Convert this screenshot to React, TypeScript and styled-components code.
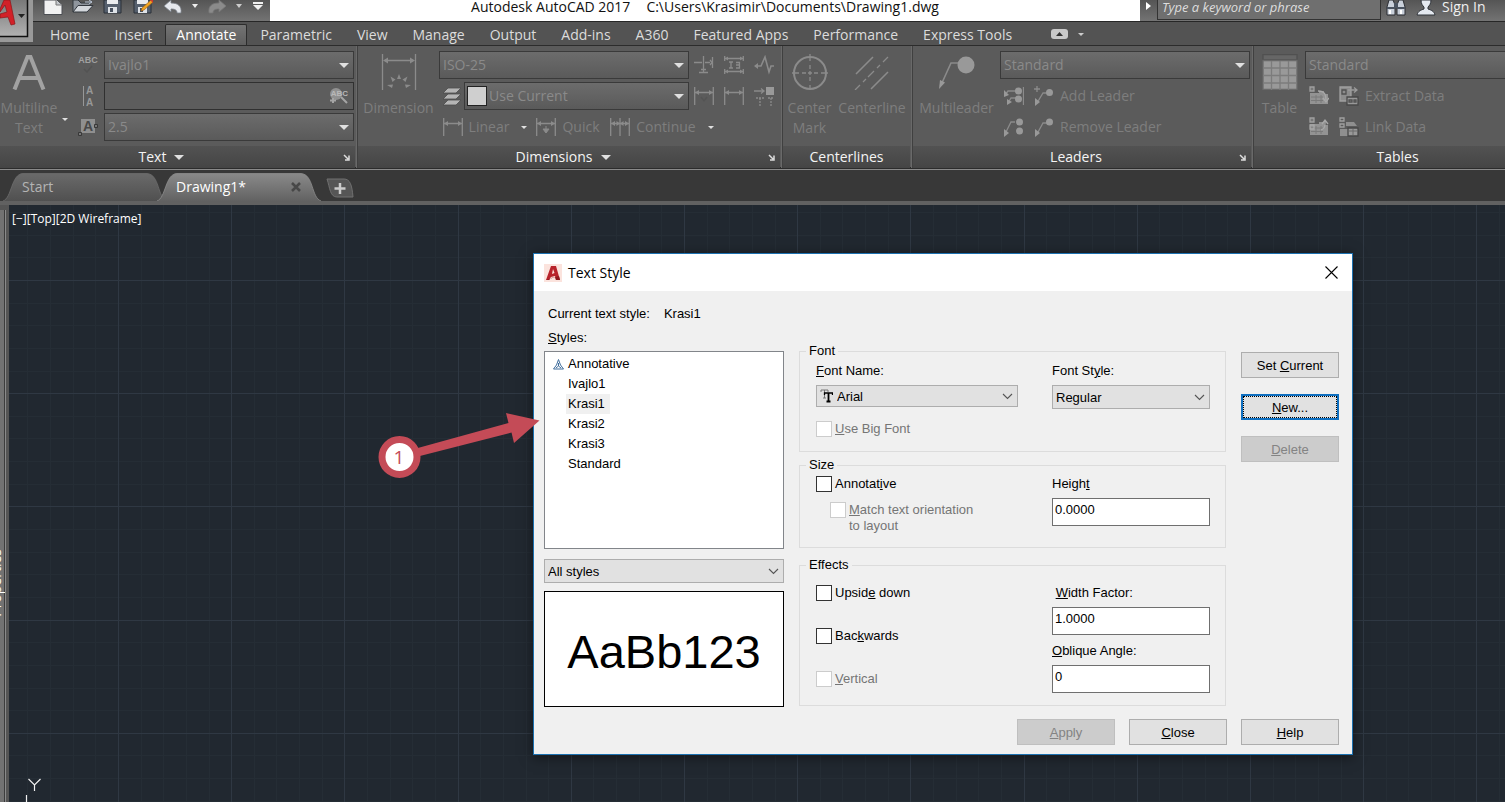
import React, { useState } from 'react';
import styled, { createGlobalStyle, css } from 'styled-components';

const UI_FONT = '"Open Sans", "Noto Sans", sans-serif';
const DIALOG_FONT = '"Liberation Sans", Arial, sans-serif';

const GlobalStyle = createGlobalStyle`
  * { box-sizing: border-box; }
  html, body { margin: 0; padding: 0; }
  body { background: #212830; overflow: hidden; font: 14px/20px ${UI_FONT}; }
  button, input, select { font: inherit; margin: 0; }
  button { border: 0; padding: 0; background: none; color: inherit; cursor: default; }
`;

/* ---------- window frame ---------- */

const Page = styled.div`
  position: relative;
  display: flex;
  flex-direction: column;
  min-height: 100vh;
`;

const TitleBar = styled.header`
  display: flex;
  align-items: flex-start;
  height: 22px;
  overflow: hidden;
  padding-left: 33px;
  border-bottom: 1px solid #262626;
  background: linear-gradient(#555, #737373);
`;

const AppButton = styled.button`
  position: absolute;
  top: 0;
  left: 0;
  width: 34px;
  height: 42px;
  z-index: 1;
  svg { display: block; }
`;

const QuickAccess = styled.div`
  display: flex;
  flex: none;
  width: 237px;
  padding-left: 5px;
`;

const QuickButton = styled.button<{ $width: number }>`
  display: flex;
  justify-content: center;
  flex: none;
  width: ${p => p.$width}px;
  height: 21px;
`;

const WindowTitle = styled.div`
  flex: 1;
  display: flex;
  justify-content: center;
  gap: 16px;
  height: 21px;
  line-height: 14px;
  background: #fff;
  color: #111;
  white-space: nowrap;
`;

const InfoCenter = styled.div`
  display: flex;
  align-items: flex-start;
  flex: none;
  width: 365px;
  height: 21px;
`;

const SearchInput = styled.input`
  width: 224px;
  height: 20px;
  padding: 0 4px 6px;
  border: 1px solid #333;
  border-top: 0;
  border-radius: 0;
  background: #6f6f6f;
  color: #ddd;
  font-style: italic;
  font-size: 13px;
  line-height: 13px;
  &::placeholder { color: #ddd; opacity: 1; }
`;

const SignIn = styled.button`
  display: flex;
  align-items: flex-start;
  gap: 6px;
  margin-left: 5px;
  color: #f0f0f0;
  line-height: 14px;
`;

/* ---------- ribbon ---------- */

const RibbonTabs = styled.nav`
  display: flex;
  align-items: flex-end;
  gap: 1px;
  height: 24px;
  padding-left: 38px;
  border-bottom: 1px solid #2c2c2c;
  background: #535353;
`;

const RibbonTab = styled.button<{ $active?: boolean }>`
  flex: none;
  height: 21px;
  padding: 0 11px;
  border: 1px solid transparent;
  border-bottom: 0;
  border-radius: 2px 2px 0 0;
  color: #dcdcdc;
  line-height: 20px;
  white-space: nowrap;
  ${p =>
    p.$active &&
    css`
      padding: 0 10px;
      border-color: #2c2c2c;
      background: linear-gradient(#747474, #5e5e5e);
      color: #fff;
    `}
`;

const RibbonToggle = styled.button`
  display: flex;
  align-items: center;
  gap: 10px;
  height: 22px;
  margin-left: 26px;
`;

const Ribbon = styled.section`
  display: flex;
  overflow: hidden;
  height: 124px;
  border-bottom: 1px solid #8a8a8a;
  background: #5b5b5b;
  box-shadow: inset 0 -2px #2c2c2c;
`;

const Panel = styled.section<{ $width: number }>`
  display: flex;
  flex-direction: column;
  flex: none;
  width: ${p => p.$width}px;
  height: 122px;
  border-right: 1px solid #404040;
  box-shadow: inset -1px 0 #696969;
`;

const PanelBody = styled.div`
  display: flex;
  height: 100px;
  padding-top: 5px;
`;

const PanelTitle = styled.div<{ $trail?: number }>`
  position: relative;
  display: flex;
  align-items: center;
  justify-content: center;
  gap: 8px;
  height: 22px;
  margin-right: 2px;
  padding-right: ${p => p.$trail ?? 0}px;
  background: linear-gradient(#525252, #454545);
  color: #f4f4f4;
`;

const Launcher = styled.button`
  position: absolute;
  right: 4px;
  bottom: 6px;
  display: flex;
`;

const BigButton = styled.button<{ $width: number }>`
  display: flex;
  flex: none;
  flex-direction: column;
  align-items: center;
  gap: 8px;
  width: ${p => p.$width}px;
  height: 95px;
  padding-top: 3px;
  color: #7e7e7e;
  line-height: 20px;
`;

const BigButtonMenu = styled.button`
  display: flex;
  justify-content: center;
  flex: none;
  width: 14px;
  height: 95px;
  padding-top: 67px;
`;

const Rows = styled.div`
  display: flex;
  flex-direction: column;
  gap: 3px;
`;

const Row = styled.div`
  display: flex;
  align-items: center;
  height: 28px;
`;

const PairRow = styled(Row)`
  gap: 6px;
`;

const ToolButton = styled.button<{ $width?: number }>`
  display: flex;
  align-items: center;
  justify-content: center;
  flex: none;
  gap: 6px;
  height: 28px;
  width: ${p => (p.$width ? `${p.$width}px` : 'auto')};
  color: #7e7e7e;
  white-space: nowrap;
`;

const ComboFrame = styled.span<{ $width: number }>`
  display: grid;
  flex: none;
  width: ${p => p.$width}px;
  height: 28px;
  > * { grid-area: 1 / 1; }
  > svg { align-self: center; justify-self: end; margin-right: 5px; pointer-events: none; }
`;

const ComboSelect = styled.select<{ $swatch?: boolean }>`
  appearance: none;
  width: 100%;
  padding: 0 24px 0 ${p => (p.$swatch ? 24 : 3)}px;
  border: 1px solid #3a3a3a;
  border-radius: 0;
  background: linear-gradient(#6c6c6c, #5a5a5a);
  color: #8a8a8a;
  &:disabled { opacity: 1; color: #8a8a8a; }
`;

const Swatch = styled.span`
  align-self: center;
  width: 20px;
  height: 20px;
  margin-left: 3px;
  border: 1px solid #222;
  background: #cfcfcf;
`;

const FindInput = styled.input`
  width: 100%;
  padding: 0 28px 0 4px;
  border: 1px solid #303030;
  border-radius: 0;
  background: #5d5d5d;
  color: #ccc;
`;

/* ---------- file tabs ---------- */

const FileTabs = styled.nav`
  display: flex;
  align-items: flex-end;
  height: 35px;
  padding-left: 3px;
  border-bottom: 4px solid #616161;
  background: #383838;
`;

const FileTab = styled.div<{ $active?: boolean }>`
  position: relative;
  flex: none;
  display: flex;
  align-items: center;
  justify-content: space-between;
  width: 164px;
  height: 28px;
  padding: 0 20px 0 19px;
  color: ${p => (p.$active ? '#fff' : '#b4b4b4')};
  > svg { position: absolute; top: 0; left: 0; }
  > button { position: relative; line-height: 30px; }
  & + & { margin-left: -10px; }
`;

const NewTab = styled.button`
  display: flex;
  margin: 0 0 3px 5px;
`;

/* ---------- drawing area ---------- */

const Workspace = styled.main`
  display: flex;
  flex: 1;
`;

const Palette = styled.aside`
  position: relative;
  flex: none;
  width: 9px;
  overflow: hidden;
  border-top: 5px solid #555;
  border-right: 2px solid #555;
  background: linear-gradient(90deg, #727272 0 4px, #3c3c3c 4px 5px, #8a8a8a 5px 6px, #555 6px);
`;

const PaletteTitle = styled.span`
  position: absolute;
  right: 1px;
  top: 339px;
  writing-mode: vertical-rl;
  transform: rotate(180deg);
  color: #fff;
  line-height: 20px;
`;

const Canvas = styled.div`
  position: relative;
  flex: 1;
  min-height: 597px;
  overflow: hidden;
  background: #212830;
`;

const GridDrawing = styled.svg`
  position: absolute;
  inset: 0;
  width: 100%;
  height: 100%;
`;

const ViewControls = styled.div`
  position: absolute;
  top: 4px;
  left: 3px;
  display: flex;
  color: #fff;
  font-size: 12px;
`;

const UcsIcon = styled.svg`
  position: absolute;
  left: 14px;
  bottom: 0;
`;

const Callout = styled.svg`
  position: absolute;
  left: 368px;
  top: 200px;
`;

/* ---------- dialog ---------- */

const Dialog = styled.section`
  position: absolute;
  left: 524px;
  top: 48px;
  border: 1px solid #1c71b0;
  background: #f0f0f0;
  color: #000;
  font: 13px/16px ${DIALOG_FONT};
  box-shadow: 0 2px 12px rgba(0, 0, 0, 0.5);
`;

const DialogHeader = styled.header`
  display: flex;
  align-items: center;
  gap: 6px;
  height: 37px;
  padding: 0 14px 0 10px;
  background: #fff;
  font: 14px/20px ${UI_FONT};
`;

const DialogTitle = styled.h1`
  flex: 1;
  margin: 0;
  font: inherit;
`;

const CloseButton = styled.button`
  display: flex;
`;

const DialogBody = styled.div`
  display: grid;
  grid-template-columns: 240px 427px 98px;
  column-gap: 15px;
  padding: 0 13px 9px 10px;
`;

const StylesColumn = styled.div`
  display: flex;
  flex-direction: column;
  padding-top: 15px;
`;

const CurrentStyle = styled.div`
  display: flex;
  gap: 14px;
  padding-left: 4px;
`;

const ListLabel = styled.span`
  margin: 8px 0 5px;
  padding-left: 4px;
`;

const StyleList = styled.ul`
  height: 198px;
  margin: 0 0 10px;
  padding: 2px 0;
  border: 1px solid #82858a;
  background: #fff;
  list-style: none;
  line-height: 20px;
`;

const StyleItem = styled.li`
  display: flex;
  align-items: center;
  padding-left: 6px;
`;

const StyleMark = styled.span`
  display: flex;
  justify-content: center;
  width: 15px;
`;

const StyleName = styled.span<{ $selected: boolean }>`
  padding: 0 5px 0 2px;
  background: ${p => (p.$selected ? '#f0f0f0' : 'transparent')};
`;

const Preview = styled.div`
  display: flex;
  align-items: center;
  justify-content: center;
  height: 116px;
  margin-top: 8px;
  padding-top: 6px;
  border: 1px solid #000;
  background: #fff;
  font-size: 47px;
  line-height: 56px;
`;

const GroupColumn = styled.div`
  display: flex;
  flex-direction: column;
  padding-top: 52px;
`;

const Group = styled.fieldset<{ $top: number; $bottom: number; $before?: number }>`
  display: grid;
  grid-template-columns: 236px 158px;
  min-width: 0;
  margin: ${p => p.$before ?? 0}px 0 0;
  padding: ${p => p.$top}px 15px ${p => p.$bottom}px 16px;
  border: 1px solid #dcdcdc;
`;

const Legend = styled.legend`
  margin-left: -10px;
  padding: 0 3px;
`;

const Stack = styled.div<{ $gap: number }>`
  display: flex;
  flex-direction: column;
  align-items: flex-start;
  gap: ${p => p.$gap}px;
`;

const Field = styled.label`
  display: flex;
  flex-direction: column;
  gap: 6px;
`;

const DropFrame = styled.span<{ $width: number; $height: number }>`
  display: grid;
  width: ${p => p.$width}px;
  height: ${p => p.$height}px;
  > * { grid-area: 1 / 1; }
  > svg { align-self: center; pointer-events: none; }
  > svg:last-child { justify-self: end; margin-right: 5px; }
`;

const DropSelect = styled.select<{ $icon?: boolean }>`
  appearance: none;
  width: 100%;
  padding: 1px 20px 0 ${p => (p.$icon ? 20 : 3)}px;
  border: 1px solid #adadad;
  border-radius: 0;
  background: #e1e1e1;
  color: #000;
`;

const TypefaceIcon = styled.svg`
  margin-left: 4px;
`;

const ValueInput = styled.input`
  width: 158px;
  height: 28px;
  padding: 0 2px 5px;
  border: 1px solid #6f6f6f;
  border-radius: 0;
  background: #fff;
  color: #000;
`;

const CheckLabel = styled.label<{ $disabled?: boolean; $nested?: boolean }>`
  display: flex;
  align-items: flex-start;
  gap: 3px;
  margin-left: ${p => (p.$nested ? 14 : 0)}px;
  color: ${p => (p.$disabled ? '#757575' : '#000')};
`;

const CheckBox = styled.input`
  appearance: none;
  flex: none;
  width: 16px;
  height: 16px;
  border: 1px solid #333;
  background: #fff;
  &:checked { box-shadow: inset 0 0 0 3px #fff; background: #333; }
  &:disabled { border-color: #ccc; }
`;

const ActionColumn = styled.div`
  display: flex;
  flex-direction: column;
  gap: 16px;
  padding-top: 61px;
`;

const DialogFooter = styled.footer`
  grid-column: 1 / -1;
  display: flex;
  justify-content: flex-end;
  gap: 14px;
  margin-top: 12px;
`;

const PushButton = styled.button<{ $focused?: boolean }>`
  width: 98px;
  height: 26px;
  padding-top: 1px;
  border: 1px solid #adadad;
  background: #e1e1e1;
  color: #000;
  &:disabled { border-color: #bfbfbf; background: #ccc; color: #838383; }
  ${p =>
    p.$focused &&
    css`
      border: 2px solid #0f6fc0;
      outline: 1px dotted #000;
      outline-offset: -3px;
    `}
`;

/* ---------- icons ---------- */

const Arrow = ({ w = 10, fill = '#e0e0e0' }: { w?: number; fill?: string }) => (
  <svg width={w} height={w / 2} viewBox="0 0 10 5" aria-hidden>
    <path d="M0 0h10L5 5z" fill={fill} />
  </svg>
);

const Chevron = () => (
  <svg width="11" height="7" viewBox="0 0 11 7" aria-hidden>
    <path d="M1 1l4.500 4.500L10 1" fill="none" stroke="#555" strokeWidth="1.1" />
  </svg>
);

const LaunchIcon = () => (
  <svg width="8" height="8" viewBox="0 0 8 8" fill="none" stroke="#ddd" aria-hidden>
    <path d="M1 1l4 4M6 1.5V6H2" strokeWidth="1.5" />
  </svg>
);

const Ico = ({ size = 20, children }: { size?: number; children: React.ReactNode }) => (
  <svg width={size} height={size} viewBox={`0 0 ${size} ${size}`} fill="none" stroke="#8b8b8b" strokeWidth="1.3" aria-hidden>
    {children}
  </svg>
);

const DimensionBig = () => (
  <Ico size={36}>
    <path d="M1.500 0v36M34.500 0v36M4 6.500h28" />
    <path d="M2 6.500l5-3v6zM34 6.500l-5-3v6z" fill="#8b8b8b" stroke="none" />
    <path d="M18 20l2 5h-4zM9.500 22.500l5 3-3 2.500zM26.500 22.500l-5 3 3 2.500zM6 31l6-.5-1 3.500zM30 31l-6-.5 1 3.500z" fill="#8b8b8b" stroke="none" />
  </Ico>
);

const CenterMarkBig = () => (
  <Ico size={36}>
    <circle cx="18" cy="19" r="16" strokeWidth="2" />
    <path d="M18 0v7M18 11v4M18 17v4M16 19h4M18 23v4M18 31v5M0 19h7M10 19h4M22 19h4M29 19h7" />
  </Ico>
);

const CenterlineBig = () => (
  <Ico size={36}>
    <path d="M2 20L19 3M17 35l17-17" strokeWidth="1.600" />
    <path d="M1 36l5-5M9 28l3-3M14 23l6-6M23 14l3-3M29 8l5-5" />
  </Ico>
);

const MultileaderBig = () => (
  <Ico size={36}>
    <path d="M2 31L12 9h9" strokeWidth="1.600" />
    <path d="M0 35l1-9 5 2.500z" fill="#999" stroke="none" />
    <circle cx="27" cy="11" r="8.500" fill="#999" stroke="none" />
  </Ico>
);

const TableBig = () => (
  <Ico size={36}>
    <path d="M1 .5h34V6H1z" fill="#666" stroke="#505050" />
    <path d="M1 6.500h34v29H1z" fill="#999" stroke="#6a6a6a" />
    <path d="M9.500 7v29M18 7v29M26.500 7v29M1 14h34M1 21.500h34M1 29h34" stroke="#7c7c7c" />
  </Ico>
);

const LetterA = () => (
  <svg width="34" height="36" viewBox="0 0 34 36" aria-hidden>
    <path d="M2.500 35.500L15.500 3h3l13 32.500M8 24h18" fill="none" stroke="#a2a2a2" strokeWidth="4" />
  </svg>
);

const SpellIcon = () => (
  <svg width="22" height="24" viewBox="0 0 22 24" aria-hidden>
    <text x="11" y="10" fontSize="9" fontWeight="700" textAnchor="middle" fill="#a0a0a0" fontFamily="Liberation Sans">
      ABC
    </text>
    <path d="M7 16l3 3 5-6" fill="none" stroke="#535353" strokeWidth="1.500" />
  </svg>
);

const AlignIcon = () => (
  <svg width="20" height="24" viewBox="0 0 20 24" fontFamily="Liberation Sans" fontSize="10" fontWeight="700" fill="#989898" aria-hidden>
    <path d="M5.500 2v20" stroke="#989898" />
    <text x="8" y="10">A</text>
    <text x="8" y="22">A</text>
  </svg>
);

const TextHeightIcon = () => (
  <svg width="20" height="20" viewBox="0 0 20 20" aria-hidden>
    <path d="M3 2h14v14H3z" fill="#8f8f8f" />
    <text x="10" y="14" fontSize="14" fontWeight="700" textAnchor="middle" fill="#484848" fontFamily="Liberation Sans">
      A
    </text>
    <path d="M.5 15.500h3v3h-3zM16.500 7.500h3v3h-3z" fill="#777" stroke="#383838" />
  </svg>
);

const FindTextIcon = () => (
  <svg width="20" height="20" viewBox="0 0 20 20" aria-hidden>
    <circle cx="7" cy="8" r="6" fill="#919191" />
    <text x="19" y="10" textAnchor="end" fontSize="8" fontWeight="700" fill="#b8b8b8" fontFamily="Liberation Sans">
      ABC
    </text>
    <path d="M12 11l6 6M4 12v5M1 14.500h6" stroke="#a5a5a5" strokeWidth="2" />
  </svg>
);

const BreakIcon = () => (
  <Ico>
    <path d="M0 7.500h8M11 7.500h5M9.500 1v16M18.500 2v11M5 17.500h9M7 14.500h5M16 5l2 2.500-2 2.500" />
  </Ico>
);
const AdjustIcon = () => (
  <Ico>
    <path d="M.7 1v5M19.300 1v5M1 3.500h18M.7 14v5M19.300 14v5M1 16.500h18M5 7h4M7 7v6M5 13h4M12 7.500h3.500v5.500H12M12 10h3" />
    <path d="M1 3.500l3-2v4zM19 3.500l-3-2v4zM1 16.500l3-2v4zM19 16.500l-3-2v4z" fill="#8b8b8b" stroke="none" />
  </Ico>
);
const JogIcon = () => (
  <Ico>
    <path d="M1 11h6l4-9 4 15 2-6h3" strokeWidth="1.600" />
    <path d="M0 11l4-3v6z" fill="#8b8b8b" stroke="none" />
  </Ico>
);
const DimIcon = ({ variant }: { variant?: 'quick' | 'continue' | 'check' }) => (
  <Ico>
    <path d="M.7 1v18M19.300 1v18M1 6.500h18" />
    <path d="M1 6.500l4-2.500v5zM19 6.500l-4-2.500v5z" fill="#8b8b8b" stroke="none" />
    {variant === 'quick' && <path d="M10 9v4M7 12h6l-3 4z" fill="#8b8b8b" strokeWidth="1" />}
    {variant === 'continue' && (
      <>
        <path d="M10 1v18" />
        <path d="M10 6.500L6.500 4v5zM10 6.500L13.500 4v5z" fill="#8b8b8b" stroke="none" />
      </>
    )}
    {variant === 'check' && <path d="M7 11l3 4 3-4" stroke="#545454" />}
  </Ico>
);
const UpdateIcon = () => (
  <Ico>
    <path d="M0 5h9M7 2.500L10 5 7 7.500" />
    <path d="M12 1h8v8h-8z" fill="#999" stroke="none" />
    <path d="M2 12h9M6 12v8M14 12h5M17 12v8" strokeDasharray="2 1" />
  </Ico>
);
const LayersIcon = () => (
  <svg width="20" height="20" viewBox="0 0 20 20" fill="#b5b5b5" stroke="#4c4c4c" strokeWidth=".8" aria-hidden>
    <path d="M1 19l5-5h13l-5 5zM1 13l5-5h13l-5 5zM1 7l5-5h13l-5 5z" />
  </svg>
);
const LeaderIcon = ({ kind }: { kind: 'align' | 'collect' | 'add' | 'remove' }) => (
  <Ico>
    {kind === 'align' && (
      <>
        <path d="M1 9l3-4h8M4 17l3-5h5M19.500 1v18" />
        <path d="M0 4v7l5-2zM3 13v6l5-3zM11 5a3.500 3.500 0 107 0 3.500 3.500 0 10-7 0M11 13a3.500 3.500 0 107 0 3.500 3.500 0 10-7 0" fill="#999" stroke="none" />
      </>
    )}
    {kind === 'collect' && (
      <>
        <path d="M1 17L7 5h4" />
        <path d="M0 12v8l5-4zM12 5a3.500 3.500 0 107 0 3.500 3.500 0 10-7 0M12 14a3.500 3.500 0 107 0 3.500 3.500 0 10-7 0" fill="#999" stroke="none" />
      </>
    )}
    {kind === 'add' && (
      <>
        <path d="M3 17L9 7h4M0 3h6M3 0v6" />
        <path d="M1 12v8l5-4zM12 6.500a3.500 3.500 0 107 0 3.500 3.500 0 10-7 0" fill="#999" stroke="none" />
      </>
    )}
    {kind === 'remove' && (
      <>
        <path d="M3 17L9 6h5" />
        <path d="M1 12v8l5-4zM12 5a3.500 3.500 0 107 0 3.500 3.500 0 10-7 0" fill="#999" stroke="none" />
      </>
    )}
  </Ico>
);
const DataIcon = ({ kind }: { kind: 'update' | 'extract' | 'upload' | 'link' }) => (
  <Ico>
    {(kind === 'update' || kind === 'upload') && (
      <>
        <path d="M1 7h9V5h5v3h4v10H1z" fill="#939393" stroke="none" />
        <path d="M2 11h12M2 14.500h12M7 9v8M12 9v8" stroke="#7a7a7a" strokeWidth="1" />
        <path d="M1 1h4v4H1z" fill="#777" stroke="#a0a0a0" />
        {kind === 'update' ? (
          <path d="M9 5c7 0 8 4 8 9M14 12l3 4 3-4" stroke="#a8a8a8" />
        ) : (
          <path d="M1 8h4v4H1zM12 13c4-1 4-4 4-8M13 7l3-4 3 4" stroke="#a8a8a8" />
        )}
      </>
    )}
    {kind === 'extract' && (
      <>
        <path d="M1 1h11v14H1z" fill="#8c8c8c" stroke="#a0a0a0" />
        <path d="M3 4h4v4H3z" stroke="#505050" />
        <path d="M9 4h9M15 1.500L18 4l-3 2.500" stroke="#9a9a9a" />
        <path d="M8 11h11v8H8z" fill="#989898" stroke="#484848" />
        <path d="M10 14h3v2h-3zM15 14h2v2h-2z" stroke="#505050" />
      </>
    )}
    {kind === 'link' && (
      <>
        <path d="M1 1h4v3H1zM1 7h4v3H1z" stroke="#a0a0a0" />
        <path d="M1 12h8v7H1zM7 5h8l3 4H7z" fill="#8f8f8f" stroke="none" />
        <path d="M9 11h10v8H9z" fill="#999" stroke="#484848" />
        <path d="M10 14h8M14 12v6" stroke="#6a6a6a" strokeWidth="1" />
      </>
    )}
  </Ico>
);

const NewIcon = () => (
  <svg width="20" height="15" viewBox="0 0 20 15" aria-hidden>
    <path d="M1 0h13l5 5v9.500H1z" fill="#f1f1f1" stroke="#4a4d52" />
    <path d="M13 0v5h6" fill="#c3c6cb" stroke="#777" />
  </svg>
);
const OpenIcon = () => (
  <svg width="22" height="13" viewBox="0 0 22 13" aria-hidden>
    <path d="M1 12V0h5l3 3h9v3" fill="#8f959d" stroke="#33383f" />
    <path d="M1 12L6 5.500h15L15 12z" fill="#d3d7dc" stroke="#33383f" />
    <path d="M13 2h7M17 0l3 2-3 2" stroke="#b8c4d4" fill="none" />
  </svg>
);
const SaveIcon = ({ pencil }: { pencil?: boolean }) => (
  <svg width="20" height="14" viewBox="0 0 20 14" aria-hidden>
    <path d="M1 0h17v13H1z" fill="#56606e" stroke="#2b3038" />
    <path d="M4 0h11v4H4z" fill="#e9ebee" />
    <path d="M5 7h9v6H5z" fill="#dfe3e8" />
    <path d="M7 8h3v4H7z" fill="#47505e" />
    {pencil && (
      <>
        <path d="M9 8L18 0l2 2-9 8-3 1z" fill="#f0a321" stroke="#9b5a12" strokeWidth=".6" />
        <path d="M17 0h3v3z" fill="#c93b30" />
      </>
    )}
  </svg>
);
const UndoIcon = ({ redo }: { redo?: boolean }) => (
  <svg width="20" height="14" viewBox="0 0 20 14" aria-hidden>
    <path
      d="M1 6L8 0v3c7 0 11 3 10 10h-4c0-3-2-4-6-4v3z"
      transform={redo ? 'matrix(-1 0 0 1 20 0)' : undefined}
      fill={redo ? '#8b8b8b' : '#e6e9ee'}
      stroke={redo ? '#777' : '#777d86'}
      strokeWidth=".8"
    />
  </svg>
);
const CustomizeIcon = () => (
  <svg width="12" height="11" viewBox="0 0 12 11" fill="#f0f0f0" aria-hidden>
    <path d="M1 2h10v2H1zM1 5h10l-5 5z" />
  </svg>
);
const BinocularsIcon = () => (
  <svg width="20" height="16" viewBox="0 0 20 16" aria-hidden>
    <path d="M1 15V7l2-7h4l2 5v10zM11 15V5l2-5h4l2 7v8z" fill="#c9d0da" stroke="#2a2d33" />
    <path d="M3 10h2v4H3zM14 10h2v4h-2z" fill="#fff" />
    <path d="M8 3h4v5H8zM1 7h8v2H1zM11 7h8v2h-8z" fill="#4a5360" />
  </svg>
);
const PersonIcon = () => (
  <svg width="20" height="16" viewBox="0 0 20 16" aria-hidden>
    <path d="M5 0h10c0 4-2 6-3 7v2c3 1 6 2 7 6H1c1-4 4-5 7-6V7C7 6 5 4 5 0z" fill="#e4e9f0" stroke="#30343b" />
  </svg>
);

const AppLogo = () => (
  <svg width="34" height="42" viewBox="0 0 34 42" aria-hidden>
    <defs>
      <linearGradient id="appBack" x1="0" y1="0" x2="0" y2="1">
        <stop offset="0" stopColor="#777" />
        <stop offset="1" stopColor="#b2b2b2" />
      </linearGradient>
    </defs>
    <path d="M0 0h33v42H0z" fill="#999" />
    <path d="M-1-1h28.500v37.500H-1z" fill="url(#appBack)" stroke="#111" strokeWidth="1.500" />
    <path d="M0 9L4 0h6l5 24-4 1-3-8-8 1v-4l7-2-2-7-5 7z" fill="#d22128" stroke="#8c1519" strokeWidth=".7" />
    <path d="M18 14h7l-3.500 4z" fill="#222" />
  </svg>
);

const DialogLogo = () => (
  <svg width="18" height="18" viewBox="0 0 18 18" aria-hidden>
    <path d="M0 0h18v18H0z" fill="#fbe3dd" />
    <path d="M2 16L7 2h5l4 14h-4l-1-4-4 1-2 3z" fill="#b8232b" />
    <path d="M8 10l1-5 1.500 4z" fill="#fbe3dd" />
    <path d="M2 16l3-1 10-3 1 4h-4l-1-3-4 1-2 2z" fill="#8d1a20" />
  </svg>
);

const AnnotativeIcon = () => (
  <svg width="11" height="11" viewBox="0 0 11 11" fill="none" stroke="#3f6d9c" aria-hidden>
    <path d="M5.500 .5L7.500 6l3 4H.5l3-4zM5.500 4v3L3 9M5.500 7L8 9" />
  </svg>
);

/* ---------- parts ---------- */

const Combo = ({ label, value, width, swatch }: { label: string; value: string; width: number; swatch?: boolean }) => (
  <ComboFrame $width={width}>
    <ComboSelect aria-label={label} disabled $swatch={swatch}>
      <option>{value}</option>
    </ComboSelect>
    {swatch && <Swatch />}
    <Arrow />
  </ComboFrame>
);

const Check = ({ disabled, nested, children }: { disabled?: boolean; nested?: boolean; children: React.ReactNode }) => (
  <CheckLabel $disabled={disabled} $nested={nested}>
    <CheckBox type="checkbox" disabled={disabled} />
    <span>{children}</span>
  </CheckLabel>
);

const FileTabShape = ({ active }: { active?: boolean }) => (
  <svg width="164" height="28" viewBox="0 0 164 28" aria-hidden>
    <defs>
      <linearGradient id={active ? 'tabOn' : 'tabOff'} x1="0" y1="0" x2="0" y2="1">
        <stop offset="0" stopColor={active ? '#8a8a8a' : '#6a6a6a'} />
        <stop offset="1" stopColor={active ? '#626262' : '#505050'} />
      </linearGradient>
    </defs>
    <path
      d="M0 28C9 25 8 1 20 .5h124c13 1 10 24 20 27.500z"
      fill={active ? 'url(#tabOn)' : 'url(#tabOff)'}
    />
    <path d="M0 28C9 25 8 1 20 .5h124c13 1 10 24 20 27.500" fill="none" stroke={active ? '#8d8d8d' : '#6c6c6c'} strokeWidth=".8" />
  </svg>
);

const STEP = 22.64;

const CanvasGrid = () => {
  const steps = Array.from({ length: 180 }, (_, i) => i);
  const isMajor = (i: number) => i % 5 === 0;
  const x = (i: number) => Math.round(109 + (i - 5) * STEP) + 0.5;
  const y = (i: number) => Math.round(75 + (i - 5) * STEP) + 0.5;
  const ordered = [...steps.filter(i => !isMajor(i)), ...steps.filter(isMajor)];
  return (
    <GridDrawing aria-hidden>
      {ordered.map(i => (
        <g key={i} stroke={isMajor(i) ? '#2f3843' : '#252d35'}>
          <line x1={x(i)} x2={x(i)} y1="0" y2="100%" />
          <line x1="0" x2="100%" y1={y(i)} y2={y(i)} />
        </g>
      ))}
    </GridDrawing>
  );
};

const RIBBON_TABS = [
  'Home', 'Insert', 'Annotate', 'Parametric', 'View', 'Manage', 'Output',
  'Add-ins', 'A360', 'Featured Apps', 'Performance', 'Express Tools',
];

const TEXT_STYLES = ['Annotative', 'Ivajlo1', 'Krasi1', 'Krasi2', 'Krasi3', 'Standard'];

const TextStyleDialog = () => {
  const [selected, setSelected] = useState('Krasi1');
  return (
    <Dialog role="dialog" aria-labelledby="dialog-title">
      <DialogHeader>
        <DialogLogo />
        <DialogTitle id="dialog-title">Text Style</DialogTitle>
        <CloseButton aria-label="Close window">
          <svg width="13" height="13" viewBox="0 0 13 13" stroke="#000" strokeWidth="1.100" aria-hidden>
            <path d="M.5.5l12 12M12.500.5l-12 12" />
          </svg>
        </CloseButton>
      </DialogHeader>
      <DialogBody>
        <StylesColumn>
          <CurrentStyle>
            <span>Current text style:</span>
            <span>Krasi1</span>
          </CurrentStyle>
          <ListLabel id="styles-label"><u>S</u>tyles:</ListLabel>
          <StyleList role="listbox" aria-labelledby="styles-label">
            {TEXT_STYLES.map(name => (
              <StyleItem key={name} role="option" aria-selected={name === selected} onClick={() => setSelected(name)}>
                <StyleMark>{name === 'Annotative' && <AnnotativeIcon />}</StyleMark>
                <StyleName $selected={name === selected}>{name}</StyleName>
              </StyleItem>
            ))}
          </StyleList>
          <DropFrame $width={240} $height={24}>
            <DropSelect aria-label="Style filter">
              <option>All styles</option>
              <option>Styles in use</option>
            </DropSelect>
            <Chevron />
          </DropFrame>
          <Preview>AaBb123</Preview>
        </StylesColumn>

        <GroupColumn>
          <Group $top={4} $bottom={14}>
            <Legend>Font</Legend>
            <Stack $gap={14}>
              <Field>
                <span><u>F</u>ont Name:</span>
                <DropFrame $width={202} $height={22}>
                  <DropSelect $icon>
                    <option>Arial</option>
                  </DropSelect>
                  <TypefaceIcon width="13" height="14" viewBox="0 0 13 14" fill="none" aria-hidden>
                    <path d="M1 3V1h7v2M4.500 1v8M3 9h3" stroke="#777" />
                    <path d="M4.500 6V4h8v2" stroke="#000" strokeWidth="1.300" />
                    <path d="M8.500 4v9M6.500 12.500h4" stroke="#000" strokeWidth="1.800" />
                  </TypefaceIcon>
                  <Chevron />
                </DropFrame>
              </Field>
              <Check disabled><u>U</u>se Big Font</Check>
            </Stack>
            <Field>
              <span>Font St<u>y</u>le:</span>
              <DropFrame $width={158} $height={24}>
                <DropSelect>
                  <option>Regular</option>
                </DropSelect>
                <Chevron />
              </DropFrame>
            </Field>
          </Group>

          <Group $before={5} $top={3} $bottom={13}>
            <Legend>Size</Legend>
            <Stack $gap={10}>
              <Check>Annotat<u>i</u>ve</Check>
              <Check disabled nested><u>M</u>atch text orientation<br />to layout</Check>
            </Stack>
            <Field>
              <span>Heigh<u>t</u></span>
              <ValueInput defaultValue="0.0000" />
            </Field>
          </Group>

          <Group $before={9} $top={12} $bottom={12}>
            <Legend>Effects</Legend>
            <Stack $gap={27}>
              <Check>Upsid<u>e</u> down</Check>
              <Check>Bac<u>k</u>wards</Check>
              <Check disabled><u>V</u>ertical</Check>
            </Stack>
            <Stack $gap={8}>
              <Field>
                <span>{'\u00a0'}<u>W</u>idth Factor:</span>
                <ValueInput defaultValue="1.0000" />
              </Field>
              <Field>
                <span><u>O</u>blique Angle:</span>
                <ValueInput defaultValue="0" />
              </Field>
            </Stack>
          </Group>
        </GroupColumn>

        <ActionColumn>
          <PushButton>Set <u>C</u>urrent</PushButton>
          <PushButton $focused><u>N</u>ew...</PushButton>
          <PushButton disabled><u>D</u>elete</PushButton>
        </ActionColumn>

        <DialogFooter>
          <PushButton disabled><u>A</u>pply</PushButton>
          <PushButton><u>C</u>lose</PushButton>
          <PushButton><u>H</u>elp</PushButton>
        </DialogFooter>
      </DialogBody>
    </Dialog>
  );
};

export default function App() {
  return (
    <Page>
      <GlobalStyle />
      <AppButton aria-label="Application menu"><AppLogo /></AppButton>
      <TitleBar>
        <QuickAccess>
          <QuickButton $width={30} aria-label="New"><NewIcon /></QuickButton>
          <QuickButton $width={30} aria-label="Open"><OpenIcon /></QuickButton>
          <QuickButton $width={30} aria-label="Save"><SaveIcon /></QuickButton>
          <QuickButton $width={30} aria-label="Save as"><SaveIcon pencil /></QuickButton>
          <QuickButton $width={30} aria-label="Undo"><UndoIcon /></QuickButton>
          <QuickButton $width={14} aria-label="Undo list">
            <svg width="6" height="9" viewBox="0 0 6 9" aria-hidden><path d="M0 4h6L3 8z" fill="#eee" /></svg>
          </QuickButton>
          <QuickButton $width={30} aria-label="Redo"><UndoIcon redo /></QuickButton>
          <QuickButton $width={14} aria-label="Redo list">
            <svg width="6" height="9" viewBox="0 0 6 9" aria-hidden><path d="M0 4h6L3 8z" fill="#ccc" /></svg>
          </QuickButton>
          <QuickButton $width={24} aria-label="Customize toolbar"><CustomizeIcon /></QuickButton>
        </QuickAccess>
        <WindowTitle>
          <span>Autodesk AutoCAD 2017</span>
          <span>C:\Users\Krasimir\Documents\Drawing1.dwg</span>
        </WindowTitle>
        <InfoCenter>
          <QuickButton $width={17} aria-label="Collapse search">
            <svg width="6" height="12" viewBox="0 0 6 12" aria-hidden><path d="M0 2l5 4-5 4z" fill="#fff" /></svg>
          </QuickButton>
          <SearchInput aria-label="Search" placeholder="Type a keyword or phrase" />
          <QuickButton $width={30} aria-label="Search"><BinocularsIcon /></QuickButton>
          <SignIn><PersonIcon />Sign In</SignIn>
        </InfoCenter>
      </TitleBar>

      <RibbonTabs>
        {RIBBON_TABS.map(name => (
          <RibbonTab key={name} $active={name === 'Annotate'}>{name}</RibbonTab>
        ))}
        <RibbonToggle aria-label="Minimize ribbon">
          <svg width="17" height="10" viewBox="0 0 17 10" aria-hidden>
            <rect width="17" height="10" rx="3" fill="#c9c9c9" />
            <path d="M5 7h7L8.500 3z" fill="#333" />
          </svg>
          <Arrow w={6} fill="#ccc" />
        </RibbonToggle>
      </RibbonTabs>

      <Ribbon>
        <Panel $width={358}>
          <PanelBody>
            <BigButton $width={58}><LetterA /><span>Multiline<br />Text</span></BigButton>
            <BigButtonMenu aria-label="Text list"><Arrow w={6} /></BigButtonMenu>
            <Rows>
              <Row>
                <ToolButton $width={32} aria-label="Check spelling"><SpellIcon /></ToolButton>
                <Combo label="Text style" value="Ivajlo1" width={250} />
              </Row>
              <Row>
                <ToolButton $width={32} aria-label="Align text"><AlignIcon /></ToolButton>
                <ComboFrame $width={250}>
                  <FindInput aria-label="Find text" />
                  <FindTextIcon />
                </ComboFrame>
              </Row>
              <Row>
                <ToolButton $width={32} aria-label="Text height"><TextHeightIcon /></ToolButton>
                <Combo label="Text height value" value="2.5" width={250} />
              </Row>
            </Rows>
          </PanelBody>
          <PanelTitle $trail={32}>Text <Arrow /><Launcher aria-label="Text settings"><LaunchIcon /></Launcher></PanelTitle>
        </Panel>

        <Panel $width={425}>
          <PanelBody>
            <BigButton $width={81}><DimensionBig />Dimension</BigButton>
            <Rows>
              <Row>
                <Combo label="Dimension style" value="ISO-25" width={250} />
                <ToolButton $width={30} aria-label="Break"><BreakIcon /></ToolButton>
                <ToolButton $width={30} aria-label="Adjust space"><AdjustIcon /></ToolButton>
                <ToolButton $width={30} aria-label="Jog line"><JogIcon /></ToolButton>
              </Row>
              <Row>
                <ToolButton $width={25} aria-label="Layer override"><LayersIcon /></ToolButton>
                <Combo label="Dimension layer" value="Use Current" width={225} swatch />
                <ToolButton $width={30} aria-label="Inspect"><DimIcon variant="check" /></ToolButton>
                <ToolButton $width={30} aria-label="Update"><DimIcon /></ToolButton>
                <ToolButton $width={30} aria-label="Reassociate"><UpdateIcon /></ToolButton>
              </Row>
              <Row>
                <ToolButton $width={74}><DimIcon />Linear</ToolButton>
                <ToolButton $width={22} aria-label="Linear list"><Arrow w={6} /></ToolButton>
                <ToolButton $width={66}><DimIcon variant="quick" />Quick</ToolButton>
                <ToolButton $width={104}><DimIcon variant="continue" />Continue</ToolButton>
                <ToolButton $width={12} aria-label="Continue list"><Arrow w={6} /></ToolButton>
              </Row>
            </Rows>
          </PanelBody>
          <PanelTitle $trail={12}>Dimensions <Arrow /><Launcher aria-label="Dimension settings"><LaunchIcon /></Launcher></PanelTitle>
        </Panel>

        <Panel $width={130}>
          <PanelBody>
            <BigButton $width={53}><CenterMarkBig /><span>Center<br />Mark</span></BigButton>
            <BigButton $width={72}><CenterlineBig />Centerline</BigButton>
          </PanelBody>
          <PanelTitle>Centerlines</PanelTitle>
        </Panel>

        <Panel $width={341}>
          <PanelBody>
            <BigButton $width={87}><MultileaderBig />Multileader</BigButton>
            <Rows>
              <Row><Combo label="Multileader style" value="Standard" width={250} /></Row>
              <PairRow>
                <ToolButton $width={28} aria-label="Align leaders"><LeaderIcon kind="align" /></ToolButton>
                <ToolButton><LeaderIcon kind="add" />Add Leader</ToolButton>
              </PairRow>
              <PairRow>
                <ToolButton $width={28} aria-label="Collect leaders"><LeaderIcon kind="collect" /></ToolButton>
                <ToolButton><LeaderIcon kind="remove" />Remove Leader</ToolButton>
              </PairRow>
            </Rows>
          </PanelBody>
          <PanelTitle $trail={12}>Leaders<Launcher aria-label="Leader settings"><LaunchIcon /></Launcher></PanelTitle>
        </Panel>

        <Panel $width={290}>
          <PanelBody>
            <BigButton $width={51}><TableBig />Table</BigButton>
            <Rows>
              <Row><Combo label="Table style" value="Standard" width={250} /></Row>
              <PairRow>
                <ToolButton $width={28} aria-label="Download from source"><DataIcon kind="update" /></ToolButton>
                <ToolButton><DataIcon kind="extract" />Extract Data</ToolButton>
              </PairRow>
              <PairRow>
                <ToolButton $width={28} aria-label="Upload to source"><DataIcon kind="upload" /></ToolButton>
                <ToolButton><DataIcon kind="link" />Link Data</ToolButton>
              </PairRow>
            </Rows>
          </PanelBody>
          <PanelTitle>Tables</PanelTitle>
        </Panel>
      </Ribbon>

      <FileTabs>
        <FileTab>
          <FileTabShape />
          <button>Start</button>
        </FileTab>
        <FileTab $active>
          <FileTabShape active />
          <button>Drawing1*</button>
          <button aria-label="Close drawing">
            <svg width="10" height="10" viewBox="0 0 10 10" stroke="#484848" strokeWidth="2.500" aria-hidden>
              <path d="M1 1l8 8M9 1L1 9" />
            </svg>
          </button>
        </FileTab>
        <NewTab aria-label="New drawing">
          <svg width="28" height="20" viewBox="0 0 28 20" aria-hidden>
            <path d="M1 1h17c6 0 8 6 9 18H11C4 19 4 10 1 1z" fill="#565656" stroke="#707070" />
            <path d="M14 5v11M8.500 10.500h11" stroke="#ccc" strokeWidth="2.500" />
          </svg>
        </NewTab>
      </FileTabs>

      <Workspace>
        <Palette><PaletteTitle>Properties</PaletteTitle></Palette>
        <Canvas>
          <CanvasGrid />
          <ViewControls>
            <button>[−]</button>
            <button>[Top]</button>
            <button>[2D Wireframe]</button>
          </ViewControls>
          <UcsIcon width="24" height="28" viewBox="0 0 24 28" aria-hidden>
            <path d="M5.500 5l6 6 6-6M11.500 11v6M3.500 21v7" fill="none" stroke="#f0f0f0" strokeWidth="1.200" />
          </UcsIcon>
          <TextStyleDialog />
          <Callout width="164" height="76" viewBox="377 405 164 76" aria-hidden>
            <path d="M416 448.500L508.500 423 506 413l33.500 7.500L514 443l-2.500-10.500L416 457z" fill="#c44b57" />
            <circle cx="399.500" cy="457" r="17.500" fill="#fff" stroke="#c44b57" strokeWidth="7" />
            <text x="399" y="464" textAnchor="middle" fontSize="19" fill="#c44b57" fontFamily="Open Sans">1</text>
          </Callout>
        </Canvas>
      </Workspace>
    </Page>
  );
}
